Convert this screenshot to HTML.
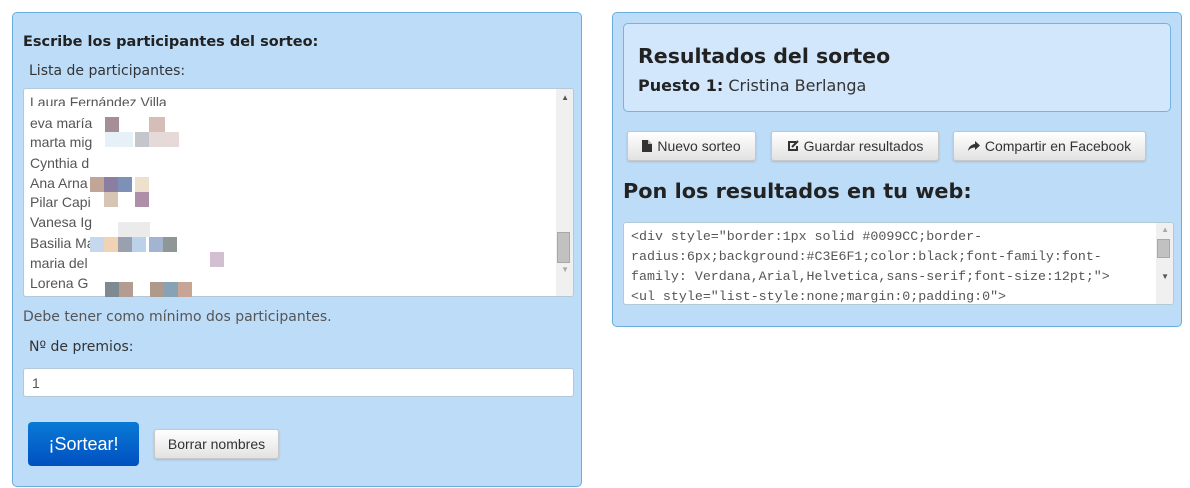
<!DOCTYPE html>
<html><head><meta charset="utf-8"><style>
body{margin:0;width:1190px;height:488px;background:#fff;font-family:"Liberation Sans",Arial,sans-serif;position:relative;overflow:hidden}
.a{position:absolute}
.panel{background:#bddcf8;border:1px solid #6aaee0;border-radius:5px;box-sizing:border-box}
.h{font-family:"DejaVu Sans",sans-serif;font-weight:bold;color:#222}
.d{font-family:"DejaVu Sans",sans-serif}
.btn{position:absolute;box-sizing:border-box;border:1px solid #c8c8c8;border-radius:3px;background:linear-gradient(#fff,#e2e2e2);font-size:14px;color:#333;text-align:center;box-shadow:0 1px 2px rgba(0,0,0,.15)}
.ta{background:#fff;border:1px solid #b5c8d8;border-radius:3px;box-sizing:border-box}
.n{position:absolute;left:30px;font-size:14px;color:#555}
.p{position:absolute;width:14px;height:15px}
.sb{position:absolute;background:#f0f0f0;width:17px}
</style></head><body>
<div class="a panel" style="left:12px;top:12px;width:570px;height:475px"></div>
<div class="a h" style="left:23px;top:34px;font-size:14.5px">Escribe los participantes del sorteo:</div>
<div class="a d" style="left:29px;top:63px;font-size:14px;color:#333">Lista de participantes:</div>
<div class="a ta" style="left:23px;top:88px;width:551px;height:209px;overflow:hidden">
<div class="sb" style="right:0;top:0;height:207px"></div>
<div class="a" style="right:4px;top:4px;font-size:8px;color:#555">▲</div>
<div class="a" style="right:3px;top:143px;width:11px;height:29px;background:#c1c1c1;border:1px solid #a8a8a8"></div>
<div class="a" style="right:4px;top:176px;font-size:8px;color:#aaa">▼</div>
</div>
<div class="n" style="top:94px;height:12px;overflow:hidden">Laura Fernández Villa</div>
<div class="n" style="top:115px">eva maría</div>
<div class="n" style="top:134px">marta mig</div>
<div class="n" style="top:155px">Cynthia d</div>
<div class="n" style="top:175px">Ana Arna</div>
<div class="n" style="top:194px">Pilar Capi</div>
<div class="n" style="top:214px">Vanesa Ig</div>
<div class="n" style="top:235px">Basilia Ma</div>
<div class="n" style="top:255px">maria del</div>
<div class="n" style="top:275px">Lorena G</div>
<div class="p" style="left:105px;top:117px;background:#a58e98"></div>
<div class="p" style="left:149px;top:117px;background:#d4beb6;width:16px"></div>
<div class="p" style="left:105px;top:132px;background:#e6f0f7;width:28px"></div>
<div class="p" style="left:135px;top:132px;background:#c5c5cc"></div>
<div class="p" style="left:149px;top:132px;background:#e5dad8;width:30px"></div>
<div class="p" style="left:90px;top:177px;background:#c1a596"></div>
<div class="p" style="left:104px;top:177px;background:#8a7fa0"></div>
<div class="p" style="left:118px;top:177px;background:#7c90b8"></div>
<div class="p" style="left:135px;top:177px;background:#ede0cc"></div>
<div class="p" style="left:104px;top:192px;background:#d6c4b4"></div>
<div class="p" style="left:135px;top:192px;background:#ae8fa8"></div>
<div class="p" style="left:118px;top:222px;background:#ebebeb;width:32px"></div>
<div class="p" style="left:90px;top:237px;background:#c6d8ee"></div>
<div class="p" style="left:104px;top:237px;background:#f0d2b4"></div>
<div class="p" style="left:118px;top:237px;background:#9aa0ae"></div>
<div class="p" style="left:132px;top:237px;background:#bcd2ea"></div>
<div class="p" style="left:149px;top:237px;background:#a2b4d0"></div>
<div class="p" style="left:163px;top:237px;background:#8e9696"></div>
<div class="p" style="left:210px;top:252px;background:#d2c0d2"></div>
<div class="p" style="left:105px;top:282px;background:#7e8a92"></div>
<div class="p" style="left:119px;top:282px;background:#b59c92"></div>
<div class="p" style="left:150px;top:282px;background:#ae998a"></div>
<div class="p" style="left:164px;top:282px;background:#86a2b4"></div>
<div class="p" style="left:178px;top:282px;background:#c8a496"></div>
<div class="a d" style="left:23px;top:309px;font-size:14px;color:#555">Debe tener como mínimo dos participantes.</div>
<div class="a d" style="left:29px;top:339px;font-size:14px;color:#333">Nº de premios:</div>
<div class="a ta" style="left:23px;top:368px;width:551px;height:29px;font-size:14px;color:#555;padding:6px 8px">1</div>
<div class="a" style="left:28px;top:422px;width:111px;height:44px;border-radius:4px;background:linear-gradient(#0a7ad6,#0050c0);color:#fff;font-size:18px;text-align:center;line-height:44px">¡Sortear!</div>
<div class="btn" style="left:154px;top:429px;width:125px;height:30px;line-height:28px">Borrar nombres</div>

<div class="a panel" style="left:612px;top:12px;width:570px;height:315px"></div>
<div class="a" style="left:623px;top:23px;width:548px;height:89px;box-sizing:border-box;background:#d2e7fb;border:1px solid #76b2e2;border-radius:5px"></div>
<div class="a h" style="left:638px;top:44px;font-size:20.5px">Resultados del sorteo</div>
<div class="a" style="left:638px;top:76px;font-size:16px;color:#333;font-family:'DejaVu Sans',sans-serif"><b style="color:#222">Puesto 1:</b> Cristina Berlanga</div>
<div class="btn" style="left:627px;top:131px;width:129px;height:30px;line-height:28px"><svg width="10" height="12" viewBox="0 0 10 12" style="vertical-align:-1px;margin-right:5px"><path d="M0 0h6l4 4v8H0z" fill="#333"/><path d="M6 0v4h4" fill="#bbb"/></svg>Nuevo sorteo</div>
<div class="btn" style="left:771px;top:131px;width:168px;height:30px;line-height:28px"><svg width="12" height="12" viewBox="0 0 12 12" style="vertical-align:-1px;margin-right:5px"><path d="M9 2H2v8h8V6" fill="none" stroke="#333" stroke-width="2"/><path d="M5 7l6-6" stroke="#333" stroke-width="2"/></svg>Guardar resultados</div>
<div class="btn" style="left:953px;top:131px;width:193px;height:30px;line-height:28px"><svg width="12" height="11" viewBox="0 0 12 11" style="vertical-align:-1px;margin-right:5px"><path d="M7 0l5 4.5-5 4.5V6.5C4 6.5 2 7.5 0 10 0.5 6 3 3.5 7 3z" fill="#333"/></svg>Compartir en Facebook</div>
<div class="a h" style="left:623px;top:179px;font-size:20.8px">Pon los resultados en tu web:</div>
<div class="a ta" style="left:623px;top:222px;width:551px;height:83px;overflow:hidden">
<div class="sb" style="right:0;top:0;height:81px"></div>
<div class="a" style="right:4px;top:2px;font-size:8px;color:#aaa">▲</div>
<div class="a" style="right:3px;top:16px;width:11px;height:17px;background:#c1c1c1;border:1px solid #a8a8a8"></div>
<div class="a" style="right:4px;top:49px;font-size:8px;color:#555">▼</div>
<div class="a" style="left:7px;top:4px;font-family:'Liberation Mono',monospace;font-size:13.3px;line-height:20px;color:#555;white-space:pre">&lt;div style="border:1px solid #0099CC;border-
radius:6px;background:#C3E6F1;color:black;font-family:font-
family: Verdana,Arial,Helvetica,sans-serif;font-size:12pt;"&gt;
&lt;ul style="list-style:none;margin:0;padding:0"&gt;</div>
</div>
</body></html>
